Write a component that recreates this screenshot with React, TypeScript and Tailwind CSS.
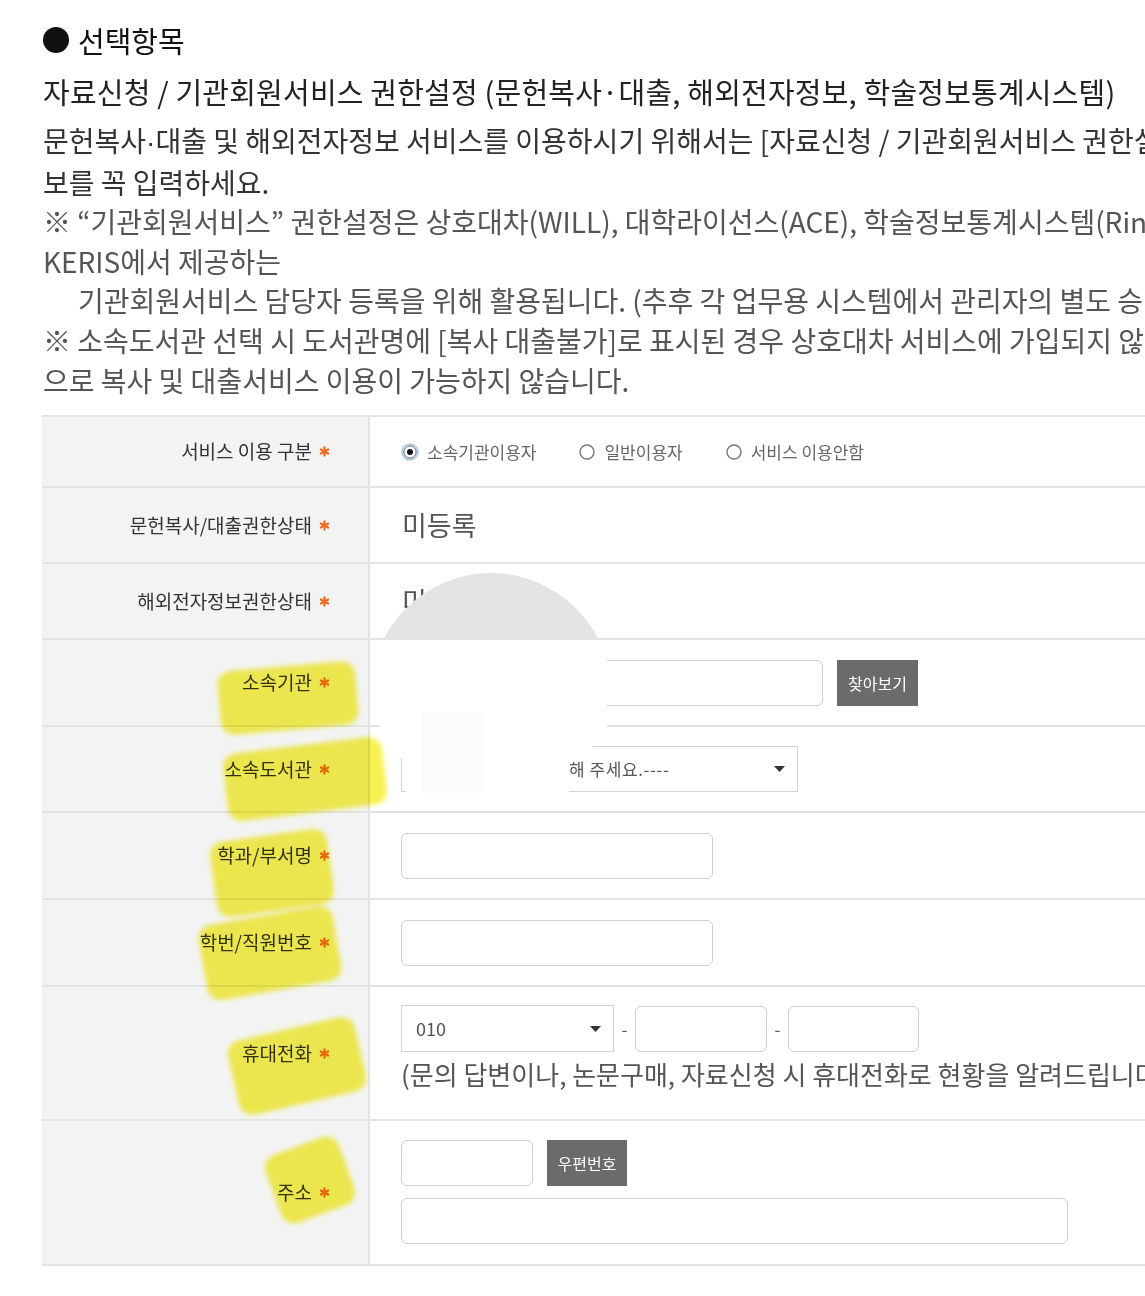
import React from "react";

const F = "font-['Noto_Sans_CJK_KR','Noto_Sans',sans-serif]";

function Star() {
  return (
    <svg width="11" height="11" viewBox="0 0 12 12" className="inline-block ml-[7px] align-middle">
      <g stroke="#ef6a1f" strokeWidth="2.4" strokeLinecap="round">
        <line x1="6" y1="1.5" x2="6" y2="10.5" />
        <line x1="2" y1="3.8" x2="10" y2="8.2" />
        <line x1="2" y1="8.2" x2="10" y2="3.8" />
      </g>
    </svg>
  );
}

function Label({ text }: { text: string }) {
  return (
    <div className="w-[328px] shrink-0 h-full bg-[#f3f3f3] border-r-2 border-[#e3e3e3] flex items-center justify-end pr-[38px] text-[19px] text-[#333]">
      <span>{text}</span>
      <Star />
    </div>
  );
}

function Row({ label, h, children, align = "center" }: { label: string; h: string; children?: React.ReactNode; align?: "center" | "top" }) {
  return (
    <div className={`flex border-b-2 border-[#e3e3e3] ${h}`}>
      <Label text={label} />
      <div className={`flex-1 pl-[31px] flex ${align === "center" ? "items-center" : "items-start"}`}>{children}</div>
    </div>
  );
}

function Radio({ checked }: { checked?: boolean }) {
  return checked ? (
    <svg width="18" height="18" viewBox="0 0 18 18" className="block">
      <circle cx="9" cy="9" r="8" fill="none" stroke="#a9cfe4" strokeWidth="1.6" />
      <circle cx="9" cy="9" r="6.2" fill="#fff" stroke="#5a5a5a" strokeWidth="1" />
      <circle cx="9" cy="9" r="3" fill="#111" />
    </svg>
  ) : (
    <svg width="18" height="18" viewBox="0 0 18 18" className="block">
      <circle cx="9" cy="9" r="7" fill="#fff" stroke="#777" strokeWidth="1.4" />
    </svg>
  );
}

function Caret() {
  return (
    <svg width="11" height="6" viewBox="0 0 11 6" className="block">
      <path d="M0 0 L11 0 L5.5 6 Z" fill="#333" />
    </svg>
  );
}

const inputCls = "h-[46px] rounded-[6px] border border-[#cfcfcf] bg-white";
const btnCls = "h-[46px] bg-[#6b6b6b] text-white text-[16px] flex items-center justify-center";

function Highlight({ l, t, w, h, r }: { l: number; t: number; w: number; h: number; r: number }) {
  return (
    <div
      className="absolute rounded-[14px] bg-[#f6f13e] opacity-90 mix-blend-multiply blur-[2.5px] pointer-events-none"
      style={{ left: l - w / 2, top: t - h / 2, width: w, height: h, transform: `rotate(${r}deg)` }}
    />
  );
}

const Dot = () => <span className="font-['Liberation_Sans',sans-serif]">·</span>;

export default function App() {
  return (
    <div className={`${F} relative w-[1145px] h-[1296px] overflow-hidden bg-white`}>
      <div className="pl-[43px] pt-[20px] whitespace-nowrap">
        <div className="h-[40px] leading-[40px] text-[29px] text-[#111] flex items-center">
          <span className="inline-block w-[26px] h-[26px] rounded-full bg-[#111] mr-[9px]" />
          <span>선택항목</span>
        </div>
        <div className="mt-[11px] h-[40px] leading-[40px] text-[29px] tracking-[0.2px] text-[#222]">
          자료신청 / 기관회원서비스 권한설정 (문헌복사·대출, 해외전자정보, 학술정보통계시스템)
        </div>
        <div className="mt-[10px] text-[28px] leading-[39.6px] text-[#333]">
          <div>문헌복사<Dot />대출 및 해외전자정보 서비스를 이용하시기 위해서는 [자료신청 / 기관회원서비스 권한설정]에 정</div>
          <div>보를 꼭 입력하세요.</div>
        </div>
        <div className="text-[28px] leading-[39.6px] text-[#555]">
          <div>※ “기관회원서비스” 권한설정은 상호대차(WILL), 대학라이선스(ACE), 학술정보통계시스템(Rinfo) 등</div>
          <div>KERIS에서 제공하는</div>
          <div className="pl-[35px]">기관회원서비스 담당자 등록을 위해 활용됩니다. (추후 각 업무용 시스템에서 관리자의 별도 승인이 필요합니다.)</div>
          <div>※ 소속도서관 선택 시 도서관명에 [복사 대출불가]로 표시된 경우 상호대차 서비스에 가입되지 않은 도서관</div>
          <div>으로 복사 및 대출서비스 이용이 가능하지 않습니다.</div>
        </div>
      </div>

      <div className="ml-[42px] mt-[15px] w-[1200px] border-t-2 border-[#e3e3e3]">
        <Row label="서비스 이용 구분" h="h-[71px]">
          <div className="flex items-center text-[17px] text-[#666]">
            <Radio checked />
            <span className="ml-[8px]">소속기관이용자</span>
            <span className="ml-[42px]"><Radio /></span>
            <span className="ml-[8px]">일반이용자</span>
            <span className="ml-[42px]"><Radio /></span>
            <span className="ml-[8px]">서비스 이용안함</span>
          </div>
        </Row>
        <Row label="문헌복사/대출권한상태" h="h-[76px]">
          <span className="text-[27px] text-[#555] pl-[1px]">미등록</span>
        </Row>
        <Row label="해외전자정보권한상태" h="h-[76px]">
          <span className="text-[27px] text-[#555] pl-[1px]">미등록</span>
        </Row>
        <Row label="소속기관" h="h-[87px]">
          <div className={`${inputCls} w-[422px]`} />
          <div className={`${btnCls} w-[81px] ml-[14px]`}>찾아보기</div>
        </Row>
        <Row label="소속도서관" h="h-[86px]">
          <div className="h-[46px] w-[397px] border border-[#d3d3d3] bg-white flex items-center pr-[12px]">
            <span className="flex-1 text-center text-[17px] tracking-[0.6px] text-[#555] pl-[4px]">----선택해 주세요.----</span>
            <Caret />
          </div>
        </Row>
        <Row label="학과/부서명" h="h-[87px]">
          <div className={`${inputCls} w-[312px]`} />
        </Row>
        <Row label="학번/직원번호" h="h-[87px]">
          <div className={`${inputCls} w-[312px]`} />
        </Row>
        <Row label="휴대전화" h="h-[134px]" align="top">
          <div className="pt-[18px] flex flex-col">
            <div className="flex items-center">
              <div className="h-[47px] w-[213px] border border-[#d3d3d3] bg-white flex items-center pl-[14px] pr-[12px]">
                <span className="flex-1 text-[18px] text-[#555]">010</span>
                <Caret />
              </div>
              <span className="w-[21px] text-center text-[17px] text-[#555]">-</span>
              <div className={`${inputCls} w-[132px]`} />
              <span className="w-[21px] text-center text-[17px] text-[#555]">-</span>
              <div className={`${inputCls} w-[131px]`} />
            </div>
            <div className="mt-[6px] whitespace-nowrap text-[26px] leading-[32px] text-[#555]">
              (문의 답변이나, 논문구매, 자료신청 시 휴대전화로 현황을 알려드립니다.)
            </div>
          </div>
        </Row>
        <Row label="주소" h="h-[145px]" align="top">
          <div className="pt-[19px] flex flex-col gap-[12px]">
            <div className="flex items-center">
              <div className={`${inputCls} w-[132px]`} />
              <div className={`${btnCls} w-[80px] ml-[14px]`}>우편번호</div>
            </div>
            <div className={`${inputCls} w-[667px]`} />
          </div>
        </Row>
      </div>

      {/* redaction marks */}
      <div className="absolute left-[371px] top-[573px] w-[240px] h-[67px] overflow-hidden pointer-events-none">
        <div className="w-[240px] h-[240px] rounded-full bg-[#e4e4e4]" />
      </div>
      <div className="absolute left-[380px] top-[640px] w-[227px] h-[87px] bg-white" />
      <div className="absolute left-[380px] top-[727px] w-[213px] h-[31px] bg-white" />
      <div className="absolute left-[406px] top-[750px] w-[163px] h-[43px] bg-white" />
      <div className="absolute left-[440px] top-[790px] w-[103px] h-[8px] bg-white" />
      <div className="absolute left-[422px] top-[713px] w-[61px] h-[80px] bg-[#fbfbfb]" />

      {/* highlighter */}
      <Highlight l={288} t={698} w={138} h={64} r={-5} />
      <Highlight l={305} t={779} w={160} h={68} r={-7} />
      <Highlight l={272} t={873} w={118} h={76} r={-8} />
      <Highlight l={270} t={953} w={136} h={76} r={-10} />
      <Highlight l={297} t={1066} w={130} h={76} r={-13} />
      <Highlight l={310} t={1180} w={78} h={72} r={-20} />
    </div>
  );
}
